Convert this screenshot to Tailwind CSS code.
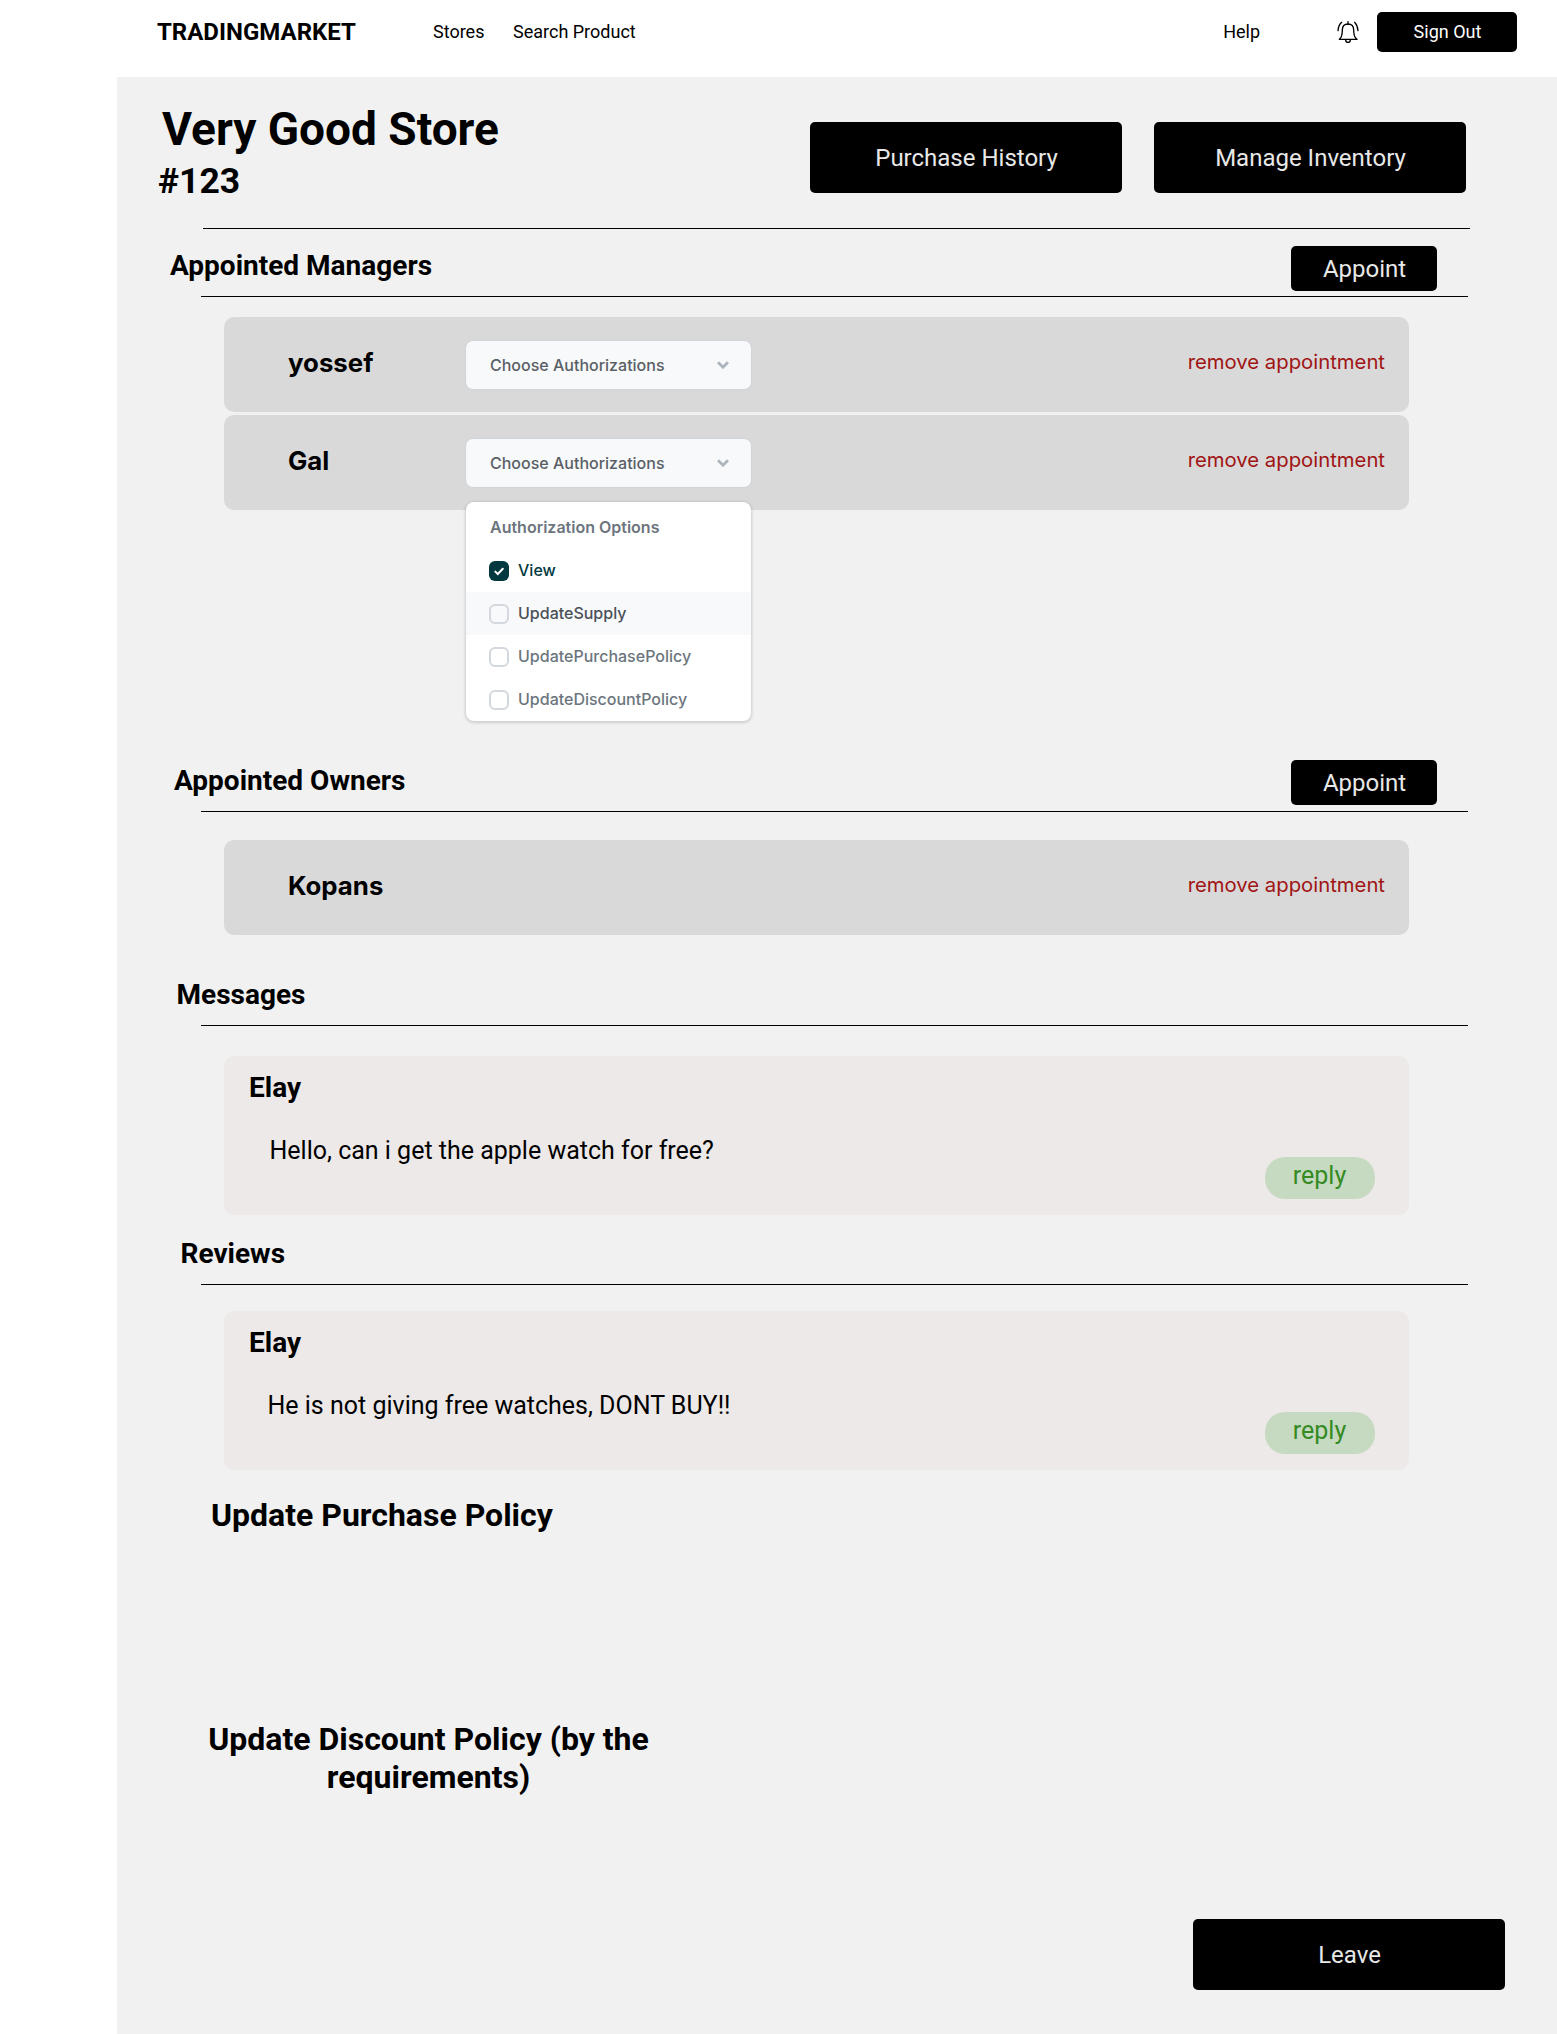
<!DOCTYPE html>
<html lang="en">
<head>
<meta charset="utf-8">
<title>TradingMarket</title>
<script src="https://cdn.jsdelivr.net/npm/@tailwindcss/browser@4"></script>
</head>
<body class="bg-white font-['Roboto',sans-serif] text-black w-[1557px] h-[2034px] overflow-hidden">
<header class="flex h-[77px] items-start pl-[157px] pr-10 pt-3 text-[18px] leading-10 whitespace-nowrap">
  <div class="w-[276px] text-[24px] font-bold">TRADINGMARKET</div>
  <nav class="flex grow">
    <a class="w-20">Stores</a>
    <a>Search Product</a>
  </nav>
  <a class="mr-[76px]">Help</a>
  <svg class="mt-2 mr-[17px] size-6" viewBox="78 60 72 72" fill="none" stroke="black" stroke-width="4" stroke-linecap="round" stroke-linejoin="round"><path d="M114 65v8M88 118c8-6 9-16 9-28 0-11 7-18 17-18s17 7 17 18c0 12 1 22 10 28zM107 119a7 8 0 0 0 14 0M95 67c-6 5-10 14-11 25M134 67c5 5 9 14 10 25"/></svg>
  <button class="h-10 w-[140px] rounded-[5px] bg-black pl-px text-white">Sign Out</button>
</header>

<main class="ml-[117px] h-[1957px] bg-[#f1f1f1]">
  <div class="flex h-[151px] items-start pr-[91px]">
    <div class="grow pt-7">
      <h1 class="pl-[45px] text-[46px] leading-[48px] font-bold">Very Good Store</h1>
      <p class="mt-2 pl-[41px] text-[35.5px] leading-10 font-bold">#123</p>
    </div>
    <div class="mt-[45px] flex gap-8 text-[24px] text-[#e8e8e8]">
      <button class="h-[71px] w-[312px] rounded-[5px] bg-black pl-px">Purchase History</button>
      <button class="h-[71px] w-[312px] rounded-[5px] bg-black pl-px">Manage Inventory</button>
    </div>
  </div>
  <hr class="ml-[86px] w-[1267px] border-black">

  <section>
    <div class="flex h-[67px] items-start justify-between pr-[120px] pl-[53px]">
      <h2 class="mt-[19px] text-[28px] leading-9 font-bold">Appointed Managers</h2>
      <button class="mt-[17px] h-[45px] w-[146px] rounded-[5px] bg-black pl-px text-[24px] text-[#e8e8e8]">Appoint</button>
    </div>
    <hr class="ml-[84px] w-[1267px] border-black">
    <div class="mt-5 ml-[107px] flex w-[1185px] flex-col gap-[3px] font-['Inter',sans-serif]">
      <div class="flex h-[95px] items-start rounded-[10px] bg-[#d9d9d9] pr-6 pl-16">
        <h3 class="mt-7 w-[177px] text-[25.8px] leading-9 font-bold">yossef</h3>
        <div class="mt-[23px] flex h-[50px] w-[287px] items-center justify-between rounded-lg border border-[#d0d5dc] bg-[#f8f9fb] pr-[22px] pb-px pl-6 text-[16px] font-medium text-[#5a5f66]">
          <span>Choose Authorizations</span>
          <svg class="h-2 w-3" viewBox="0 0 12 8" fill="none" stroke="#adb5bd" stroke-width="2.8"><path d="M1 1.2l5 5 5-5"/></svg>
        </div>
        <a class="mt-[29px] ml-auto text-[20.3px] leading-8 text-[#a01414]">remove appointment</a>
      </div>
      <div class="flex h-[95px] items-start rounded-[10px] bg-[#d9d9d9] pr-6 pl-16">
        <h3 class="mt-7 w-[177px] text-[25.8px] leading-9 font-bold">Gal</h3>
        <div class="relative">
          <div class="mt-[23px] flex h-[50px] w-[287px] items-center justify-between rounded-lg border border-[#d0d5dc] bg-[#f8f9fb] pr-[22px] pb-px pl-6 text-[16px] font-medium text-[#5a5f66]">
            <span>Choose Authorizations</span>
            <svg class="h-2 w-3" viewBox="0 0 12 8" fill="none" stroke="#adb5bd" stroke-width="2.8"><path d="M1 1.2l5 5 5-5"/></svg>
          </div>
          <div class="absolute top-[87px] left-px flex h-[219px] w-[285px] flex-col rounded-lg bg-white pt-1 text-[16px] leading-[43px] font-medium text-[#6c757d] shadow-[0_1px_3px_1px_rgba(0,0,0,0.15)]">
            <div class="pl-6 font-semibold">Authorization Options</div>
            <div class="flex items-center gap-[9px] pl-[23px] text-[#003840]">
              <svg class="size-5" viewBox="0 0 20 20" fill="none"><rect width="20" height="20" rx="6" fill="#003840"/><path d="M6.3 10.6l2.5 2.4 5-5.2" stroke="white" stroke-width="2" stroke-linecap="round"/></svg>
              <span>View</span>
            </div>
            <div class="flex items-center gap-[9px] bg-[#f8f9fb] pl-[23px] text-[#495057]">
              <i class="size-5 rounded-md border-2 border-[#d3d8de]"></i><span>UpdateSupply</span>
            </div>
            <div class="flex items-center gap-[9px] pl-[23px]">
              <i class="size-5 rounded-md border-2 border-[#d3d8de]"></i><span>UpdatePurchasePolicy</span>
            </div>
            <div class="flex items-center gap-[9px] pl-[23px]">
              <i class="size-5 rounded-md border-2 border-[#d3d8de]"></i><span>UpdateDiscountPolicy</span>
            </div>
          </div>
        </div>
        <a class="mt-[29px] ml-auto text-[20.3px] leading-8 text-[#a01414]">remove appointment</a>
      </div>
    </div>
  </section>

  <section class="pt-[250px]">
    <div class="flex h-[51px] items-start justify-between pr-[120px] pl-[57px]">
      <h2 class="mt-[3px] text-[28px] leading-9 font-bold">Appointed Owners</h2>
      <button class="h-[45px] w-[146px] rounded-[5px] bg-black pl-px text-[24px] text-[#e8e8e8]">Appoint</button>
    </div>
    <hr class="ml-[84px] w-[1267px] border-black">
    <div class="mt-7 ml-[107px] flex h-[95px] w-[1185px] items-start justify-between rounded-[10px] bg-[#d9d9d9] pr-6 pl-16 font-['Inter',sans-serif]">
      <h3 class="mt-7 text-[25.8px] leading-9 font-bold">Kopans</h3>
      <a class="mt-[29px] text-[20.3px] leading-8 text-[#a01414]">remove appointment</a>
    </div>
  </section>

  <section class="pt-[42px]">
    <h2 class="h-12 pl-[59.5px] text-[28px] leading-9 font-bold">Messages</h2>
    <hr class="ml-[84px] w-[1267px] border-black">
    <article class="mt-[30px] ml-[107px] flex h-[159px] w-[1185px] items-start justify-between rounded-[10px] bg-[#ede9e8] pr-[34px] pl-[25px]">
      <div>
        <h3 class="mt-3.5 text-[28px] leading-9 font-bold">Elay</h3>
        <p class="mt-[29px] pl-[20.5px] text-[25px] leading-8">Hello, can i get the apple watch for free?</p>
      </div>
      <button class="mt-[101px] h-[42px] w-[110px] rounded-[20px] bg-[#c6dac1] pr-px pb-1 text-[25px] text-[#358a23]">reply</button>
    </article>
  </section>

  <section class="pt-[21px]">
    <h2 class="h-12 pl-[63.5px] text-[28px] leading-9 font-bold">Reviews</h2>
    <hr class="ml-[84px] w-[1267px] border-black">
    <article class="mt-[26px] ml-[107px] flex h-[159px] w-[1185px] items-start justify-between rounded-[10px] bg-[#ede9e8] pr-[34px] pl-[25px]">
      <div>
        <h3 class="mt-3.5 text-[28px] leading-9 font-bold">Elay</h3>
        <p class="mt-[29px] pl-[18.5px] text-[25px] leading-8">He is not giving free watches, DONT BUY!!</p>
      </div>
      <button class="mt-[101px] h-[42px] w-[110px] rounded-[20px] bg-[#c6dac1] pr-px pb-1 text-[25px] text-[#358a23]">reply</button>
    </article>
  </section>

  <section class="w-[623px] pt-[26px] text-center text-[32px] leading-[38px] font-bold">
    <h2 class="pl-[94px] text-left">Update Purchase Policy</h2>
    <h2 class="mt-[186px]">Update Discount Policy (by the<br>requirements)</h2>
  </section>
  <button class="mt-[123px] ml-[1076px] h-[71px] w-[312px] rounded-[5px] bg-black pl-px text-[24px] text-[#e8e8e8]">Leave</button>
</main>
</body>
</html>
